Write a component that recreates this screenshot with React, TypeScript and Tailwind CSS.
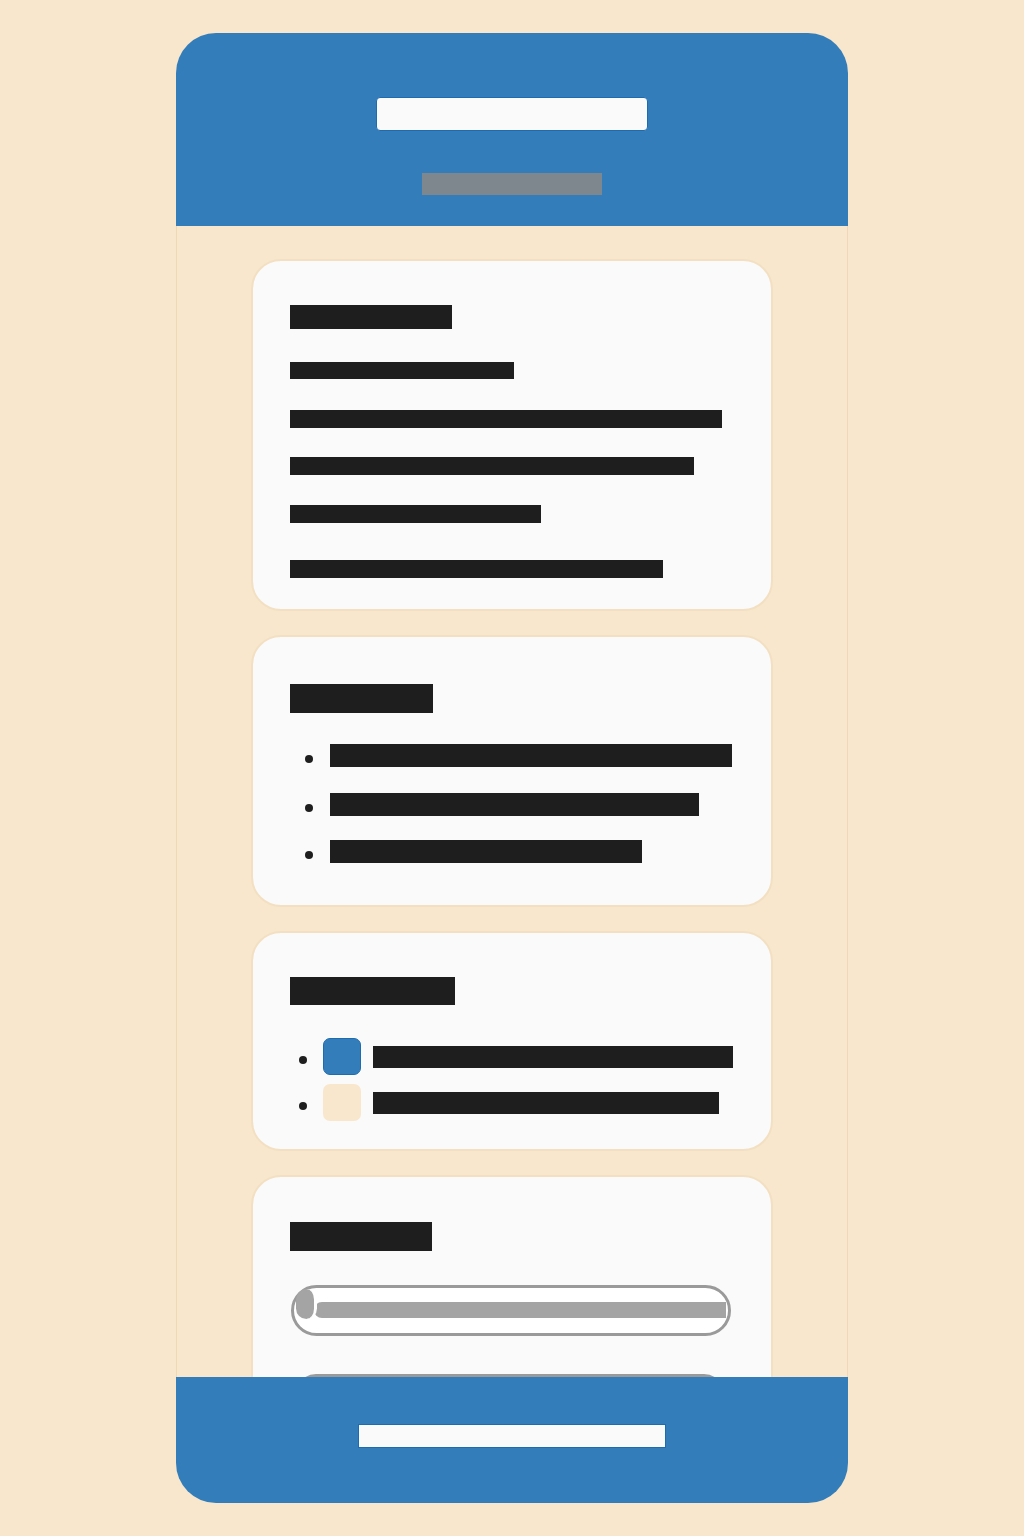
import React from "react";

const Bar = ({ w, h, className = "" }: { w: string; h: string; className?: string }) => (
  <div className={`${w} ${h} bg-[#1e1e1e] ${className}`} />
);

function Card({ children, className = "" }: { children: React.ReactNode; className?: string }) {
  return (
    <div
      className={`w-[522px] shrink-0 rounded-[30px] border-2 border-[#f3e0c2] bg-[#fafafa] pl-[37px] ${className}`}
    >
      {children}
    </div>
  );
}

export default function App() {
  return (
    <div className="min-h-[1536px] w-full bg-[#f8e7cc] pt-[33px]">
      <div className="mx-auto flex h-[1470px] w-[672px] flex-col overflow-hidden rounded-[40px]">
        {/* header */}
        <header className="flex h-[193px] shrink-0 flex-col items-center bg-[#337eba]">
          <div className="mt-[64px] h-[34px] w-[272px] rounded-[4px] border border-[#1f6bb0] bg-[#fafafa]" />
          <div className="mt-[42px] h-[22px] w-[180px] bg-[#7e878e]" />
        </header>

        {/* content */}
        <main className="flex min-h-0 flex-1 flex-col items-center gap-6 overflow-hidden border-x border-[#eed8b6] pt-[33px]">
          <Card className="h-[352px] pt-[44px]">
            <Bar w="w-[162px]" h="h-[24px]" />
            <Bar w="w-[224px]" h="h-[17px]" className="mt-[33px]" />
            <Bar w="w-[432px]" h="h-[18px]" className="mt-[31px]" />
            <Bar w="w-[404px]" h="h-[18px]" className="mt-[29px]" />
            <Bar w="w-[251px]" h="h-[18px]" className="mt-[30px]" />
            <Bar w="w-[373px]" h="h-[18px]" className="mt-[37px]" />
          </Card>

          <Card className="h-[272px] pt-[47px]">
            <Bar w="w-[143px]" h="h-[29px]" />
            <ul className="mt-[31px] flex flex-col">
              {[
                { w: "w-[402px]", mt: "" },
                { w: "w-[369px]", mt: "mt-[26px]" },
                { w: "w-[312px]", mt: "mt-[24px]" },
              ].map((r, i) => (
                <li key={i} className={`flex items-center ${r.mt}`}>
                  <span className="ml-[15px] mt-[6px] h-[8px] w-[8px] rounded-full bg-[#1e1e1e]" />
                  <Bar w={r.w} h="h-[23px]" className="ml-[17px]" />
                </li>
              ))}
            </ul>
          </Card>

          <Card className="h-[220px] pt-[44px]">
            <Bar w="w-[165px]" h="h-[28px]" />
            <ul className="mt-[33px] flex flex-col gap-[9px]">
              <li className="flex items-center">
                <span className="ml-[9px] mt-[6px] h-[8px] w-[8px] rounded-full bg-[#1e1e1e]" />
                <span className="ml-[16px] h-[37px] w-[38px] rounded-[7px] border border-[#1f6bb0] bg-[#337eba]" />
                <Bar w="w-[360px]" h="h-[22px]" className="ml-[12px]" />
              </li>
              <li className="flex items-center">
                <span className="ml-[9px] mt-[6px] h-[8px] w-[8px] rounded-full bg-[#1e1e1e]" />
                <span className="ml-[16px] h-[37px] w-[38px] rounded-[7px] bg-[#f8e7cc]" />
                <Bar w="w-[346px]" h="h-[22px]" className="ml-[12px]" />
              </li>
            </ul>
          </Card>

          <Card className="h-[320px] shrink-0 pt-[45px]">
            <Bar w="w-[142px]" h="h-[29px]" />
            <div className="relative ml-[1px] mt-[34px] h-[51px] w-[440px] rounded-full border-[3px] border-[#9a9a9a] bg-white">
              <div className="absolute left-[20px] right-[2px] top-[14px] h-[16px] rounded-l-[10px] bg-[#a4a4a4]" />
              <div className="absolute left-[2px] top-[1px] h-[30px] w-[21px] rounded-full border-r-[3px] border-white bg-[#a4a4a4]" />
            </div>
            <div className="ml-[6px] mt-[38px] h-[40px] w-[428px] rounded-full border-[3px] border-[#9a9a9a] bg-[#e9d2b0]" />
          </Card>
        </main>

        {/* footer */}
        <footer className="flex h-[126px] shrink-0 items-start justify-center bg-[#337eba]">
          <div className="mt-[47px] h-[24px] w-[308px] border border-[#1f6bb0] bg-[#fafafa]" />
        </footer>
      </div>
    </div>
  );
}
